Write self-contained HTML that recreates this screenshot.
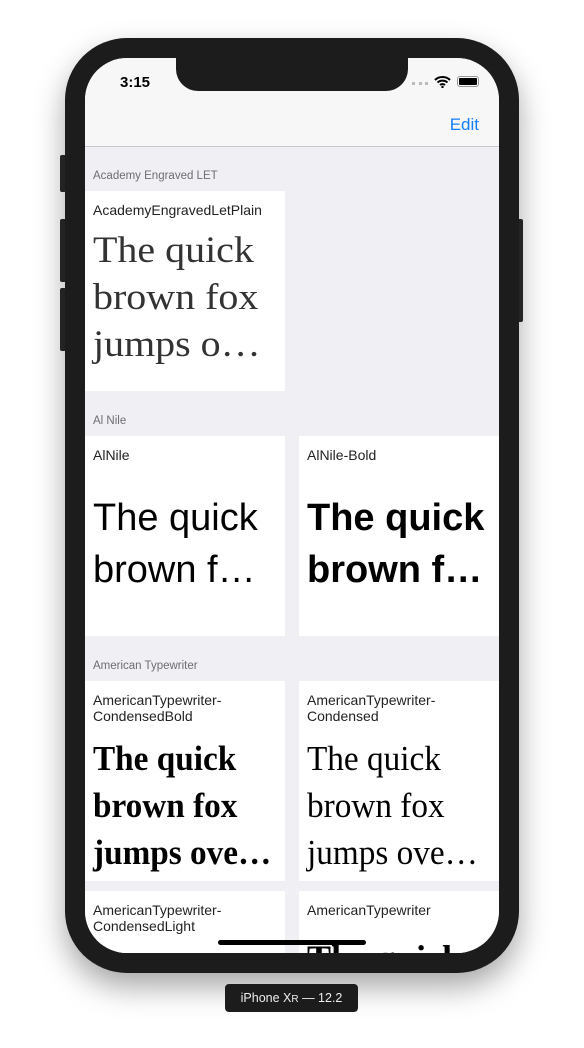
<!DOCTYPE html>
<html><head><meta charset="utf-8"><style>
*{margin:0;padding:0;box-sizing:border-box}
body{width:584px;height:1048px;background:#fff;position:relative;overflow:hidden;font-family:"Liberation Sans",sans-serif}
.btn{position:absolute;background:#2a2a2a;border-radius:2px}
.phone{position:absolute;left:65px;top:38px;width:454px;height:935px;background:#1c1c1c;border-radius:62px;box-shadow:0 14px 30px rgba(0,0,0,.35)}
.screen{position:absolute;left:85px;top:58px;width:414px;height:895px;border-radius:42px;overflow:hidden;background:#efeff4}
.nav{position:absolute;left:0;top:0;width:414px;height:89px;background:#f7f7f7;border-bottom:1px solid #c8c7cc}
.notch{position:absolute;left:91px;top:0;width:232px;height:33px;background:#1c1c1c;border-radius:0 0 22px 22px}
.time{position:absolute;left:35px;top:16px;font-size:15px;font-weight:bold;color:#000}
.edit{position:absolute;right:20px;top:57px;font-size:17px;color:#147efb}
.hdr{position:absolute;left:8px;font-size:11.5px;color:#6d6d72}
.cell{position:absolute;width:200px;height:200px;background:#fff;overflow:hidden}
.name{position:absolute;left:8px;top:11px;font-size:14px;color:#222;line-height:16px}
.s{position:absolute;left:8px;color:#000;white-space:nowrap}
.home{position:absolute;left:133px;top:882px;width:148px;height:5px;border-radius:3px;background:#000}
.badge{position:absolute;left:225px;top:984px;width:133px;height:28px;background:#1c1c1c;border-radius:4px;color:#eee;font-size:12.5px;text-align:center;line-height:28px}
</style></head><body>
<div class="btn" style="left:60px;top:155px;width:6px;height:37px"></div>
<div class="btn" style="left:60px;top:219px;width:6px;height:63px"></div>
<div class="btn" style="left:60px;top:288px;width:6px;height:63px"></div>
<div class="btn" style="left:517px;top:219px;width:6px;height:103px"></div>
<div class="phone"></div>
<div class="screen">
<div class="nav"></div>
<div class="notch"></div>
<div class="time">3:15</div>
<div style="position:absolute;left:327px;top:24px;width:16px;height:3px;border-top:3px dotted #bbb"></div>
<svg style="position:absolute;left:349px;top:17px" width="17" height="13" viewBox="0 0 17 13"><path d="M1 5a11 11 0 0 1 15 0M3.5 7.5a7.5 7.5 0 0 1 10 0M6 10a4 4 0 0 1 5 0" stroke="#000" stroke-width="2" fill="none"/><circle cx="8.5" cy="12" r="1.2"/></svg>
<div style="position:absolute;left:372px;top:18px;width:22px;height:11px;border:1px solid #999;border-radius:3px;padding:1px"><div style="width:100%;height:100%;background:#000;border-radius:1px"></div></div>
<div class="edit">Edit</div>

<div class="hdr" style="top:112px">Academy Engraved LET</div>
<div class="cell" style="left:0;top:133px">
<div class="name">AcademyEngravedLetPlain</div>
<div class="s" style="top:36px;font-family:'Liberation Serif',serif;font-size:37px;line-height:47px;color:#333;transform:scaleX(1.08);transform-origin:left">The quick<br>brown fox<br>jumps o…</div>
</div>

<div class="hdr" style="top:357px">Al Nile</div>
<div class="cell" style="left:0;top:378px">
<div class="name">AlNile</div>
<div class="s" style="top:56px;font-size:38px;line-height:52px">The quick<br>brown f…</div>
</div>
<div class="cell" style="left:214px;top:378px">
<div class="name">AlNile-Bold</div>
<div class="s" style="top:56px;font-size:38px;line-height:52px;font-weight:bold">The quick<br>brown f…</div>
</div>

<div class="hdr" style="top:602px">American Typewriter</div>
<div class="cell" style="left:0;top:623px">
<div class="name">AmericanTypewriter-<br>CondensedBold</div>
<div class="s" style="top:54px;font-family:'Liberation Serif',serif;font-weight:bold;font-size:35px;line-height:47px;transform:scaleX(.95);transform-origin:left">The quick<br>brown fox<br>jumps ove…</div>
</div>
<div class="cell" style="left:214px;top:623px">
<div class="name">AmericanTypewriter-<br>Condensed</div>
<div class="s" style="top:54px;font-family:'Liberation Serif',serif;font-size:35px;line-height:47px;transform:scaleX(.95);transform-origin:left">The quick<br>brown fox<br>jumps ove…</div>
</div>
<div class="cell" style="left:0;top:833px">
<div class="name">AmericanTypewriter-<br>CondensedLight</div>
</div>
<div class="cell" style="left:214px;top:833px">
<div class="name">AmericanTypewriter</div>
<div class="s" style="top:46px;font-family:'Liberation Serif',serif;font-weight:bold;font-size:36px">The quick</div>
</div>
<div class="home"></div>
</div>
<div class="badge">iPhone X<span style="font-size:10px">R</span> — 12.2</div>
</body></html>
